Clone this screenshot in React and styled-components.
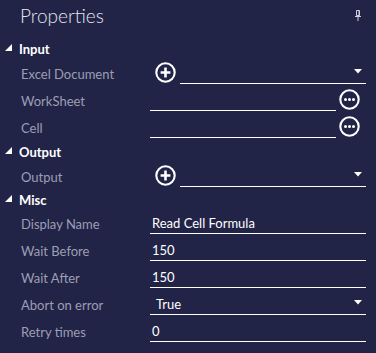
import React from "react";
import styled, { createGlobalStyle } from "styled-components";

const Global = createGlobalStyle`
  html, body { margin: 0; padding: 0; background: #222447; }
  * { box-sizing: border-box; }
`;

const sections = [
  {
    title: "Input",
    height: 22,
    rows: [
      { label: "Excel Document", kind: "combo-add" },
      { label: "WorkSheet", kind: "browse" },
      { label: "Cell", kind: "browse" },
    ],
  },
  {
    title: "Output",
    height: 22,
    rows: [{ label: "Output", kind: "combo-add" }],
  },
  {
    title: "Misc",
    height: 20,
    rows: [
      { label: "Display Name", kind: "text", value: "Read Cell Formula" },
      { label: "Wait Before", kind: "text", value: "150" },
      { label: "Wait After", kind: "text", value: "150" },
      { label: "Abort on error", kind: "combo", value: "True" },
      { label: "Retry times", kind: "text", value: "0" },
    ],
  },
];

function App() {
  return (
    <Panel>
      <Global />
      <TitleBar>
        <Title>Properties</Title>
        <PinIcon />
      </TitleBar>
      {sections.map((s) => (
        <Section key={s.title}>
          <SectionHeader $h={s.height}>
            <Expander />
            {s.title}
          </SectionHeader>
          {s.rows.map((r) => (
            <Row key={r.label}>
              <Label>{r.label}</Label>
              <Editor row={r} />
            </Row>
          ))}
        </Section>
      ))}
    </Panel>
  );
}

function Editor({ row }) {
  if (row.kind === "combo-add") {
    return (
      <Field>
        <AddIcon />
        <Combo $gap>
          <Value />
          <Arrow />
        </Combo>
      </Field>
    );
  }
  if (row.kind === "browse") {
    return (
      <Field>
        <TextBox>
          <Value />
        </TextBox>
        <MoreIcon />
      </Field>
    );
  }
  if (row.kind === "combo") {
    return (
      <Field>
        <Combo>
          <Value $indent>{row.value}</Value>
          <Arrow />
        </Combo>
      </Field>
    );
  }
  return (
    <Field>
      <TextBox>
        <Value>{row.value}</Value>
      </TextBox>
    </Field>
  );
}

function PinIcon() {
  return (
    <PinSlot>
      <svg width="6" height="11" viewBox="0 0 6 11" fill="none">
        <path d="M1.5 0.5 H4.5 V5.5 H1.5 Z" stroke="#cfd0dc" strokeWidth="1" />
        <rect x="0" y="6" width="6" height="1" fill="#cfd0dc" />
        <rect x="2.5" y="7" width="1" height="4" fill="#cfd0dc" />
        <rect x="3.5" y="1" width="1" height="5" fill="#cfd0dc" />
      </svg>
    </PinSlot>
  );
}

function AddIcon() {
  return (
    <IconSlot>
      <svg width="21" height="21" viewBox="0 0 21 21" fill="none">
        <circle cx="10.5" cy="10.5" r="9.2" stroke="#fff" strokeWidth="2.1" />
        <path d="M10.5 5.6 V15.4 M5.6 10.5 H15.4" stroke="#fff" strokeWidth="2.6" />
      </svg>
    </IconSlot>
  );
}

function MoreIcon() {
  return (
    <MoreSlot>
      <svg width="21" height="21" viewBox="0 0 21 21" fill="none">
        <circle cx="10.5" cy="10.5" r="9.2" stroke="#fff" strokeWidth="2.1" />
        <circle cx="6.5" cy="10.5" r="1.5" fill="#fff" />
        <circle cx="10.5" cy="10.5" r="1.5" fill="#fff" />
        <circle cx="14.5" cy="10.5" r="1.5" fill="#fff" />
      </svg>
    </MoreSlot>
  );
}

function Arrow() {
  return (
    <ArrowSlot>
      <svg width="8" height="5" viewBox="0 0 8 5">
        <path d="M0 0 H8 L4 4.5 Z" fill="#fff" />
      </svg>
    </ArrowSlot>
  );
}

function Expander() {
  return (
    <ExpanderSlot>
      <svg width="7" height="7" viewBox="0 0 7 7">
        <path d="M7 0 V7 H0 Z" fill="#fff" />
      </svg>
    </ExpanderSlot>
  );
}

const Panel = styled.div`
  width: 376px;
  height: 353px;
  background: #222447;
  font-family: Lato, "Open Sans", sans-serif;
  overflow: hidden;
`;

const TitleBar = styled.div`
  height: 38px;
  display: flex;
  align-items: flex-start;
  justify-content: space-between;
  padding: 4px 15px 0 20px;
`;

const Title = styled.div`
  font-size: 19px;
  font-weight: 300;
  color: #e4e5ee;
`;

const PinSlot = styled.span`
  display: flex;
  margin-top: 6px;
`;

const Section = styled.div`
  display: flex;
  flex-direction: column;
`;

const SectionHeader = styled.div`
  height: ${(p) => p.$h}px;
  display: flex;
  align-items: center;
  padding-left: 5px;
  font-size: 13px;
  font-weight: 700;
  color: #ffffff;
`;

const ExpanderSlot = styled.span`
  display: flex;
  width: 14px;
  margin-top: -3px;
`;

const Row = styled.div`
  height: 27px;
  display: flex;
  align-items: center;
  padding-left: 21px;
`;

const Label = styled.div`
  width: 129px;
  font-size: 13px;
  color: #9c9eb4;
  white-space: nowrap;
`;

const Field = styled.div`
  width: 216px;
  display: flex;
  align-items: center;
`;

const TextBox = styled.div`
  flex: 1;
  height: 21px;
  display: flex;
  align-items: center;
  border-bottom: 1px solid #ffffff;
`;

const Combo = styled.div`
  flex: 1;
  height: 21px;
  display: flex;
  align-items: center;
  border-bottom: 1px solid #ffffff;
  margin-left: ${(p) => (p.$gap ? "4px" : "0")};
`;

const Value = styled.span`
  flex: 1;
  font-size: 13px;
  color: #ffffff;
  padding-left: ${(p) => (p.$indent ? "6px" : "2px")};
`;

const IconSlot = styled.span`
  display: flex;
  margin-left: 5px;
  margin-top: -2px;
`;

const MoreSlot = styled.span`
  display: flex;
  margin: -2px 6px 0 3px;
`;

const ArrowSlot = styled.span`
  display: flex;
  margin-right: 4px;
  margin-top: -3px;
`;

export default App;
